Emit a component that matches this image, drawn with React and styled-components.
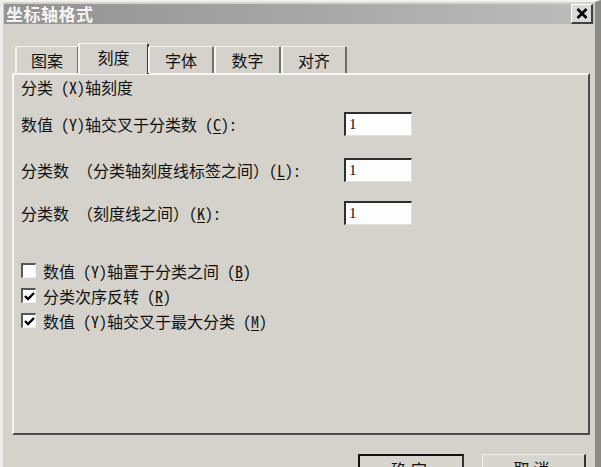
import React from "react";
import styled, { createGlobalStyle } from "styled-components";

const FONT = `"Noto Sans Mono CJK SC", "Noto Sans CJK SC", "DejaVu Sans", sans-serif`;

const Global = createGlobalStyle`
  html, body { margin: 0; padding: 0; background: #d5d2cc; }
  body { font-family: ${FONT}; }
  * { box-sizing: border-box; }
`;

const Window = styled.div`
  width: 601px;
  height: 467px;
  overflow: hidden;
  background: #d5d2cc;
  border-top: 2px solid #f2f1ee;
  border-left: 3px solid #eeede9;
  border-right: 6px solid #8a8a88;
  padding: 2px 0 0 1px;
  display: flex;
  flex-direction: column;
  color: #111;
`;

const TitleBar = styled.div`
  height: 27px;
  margin-right: 1px;
  background: linear-gradient(90deg, #939393 0%, #a4a4a4 45%, #bdbdbd 100%);
  display: flex;
  align-items: center;
  justify-content: space-between;
  padding: 0 1px 0 2px;
`;

const Title = styled.span`
  color: #f4f4f4;
  font-family: "Noto Sans CJK SC", sans-serif;
  font-size: 17px;
  font-weight: 700;
  letter-spacing: 0.5px;
  line-height: 20px;
`;

const CloseBtn = styled.div`
  width: 22px;
  height: 20px;
  flex: none;
  background: #dcdad6;
  border-top: 1px solid #ffffff;
  border-left: 1px solid #ffffff;
  border-right: 2px solid #404040;
  border-bottom: 2px solid #404040;
  display: flex;
  align-items: center;
  justify-content: center;
`;

const Body = styled.div`
  padding: 19px 5px 0 8px;
  display: flex;
  flex-direction: column;
`;

const TabRow = styled.div`
  display: flex;
  align-items: flex-end;
  height: 30px;
  padding-left: 3px;
  position: relative;
  z-index: 1;
`;

const Tab = styled.div`
  width: ${(p) => p.$w}px;
  height: ${(p) => (p.$active ? 31 : 27)}px;
  margin: 0 ${(p) => (p.$active ? -1 : 0)}px ${(p) => (p.$active ? -1 : 0)}px;
  background: #d5d2cc;
  border-top: 1px solid #f7f6f3;
  border-left: 2px solid #f7f6f3;
  border-right: 2px solid ${(p) => (p.$active ? "#3c3c3c" : "#6e6e6c")};
  border-radius: 2px 2px 0 0;
  display: flex;
  align-items: ${(p) => (p.$active ? "flex-start" : "center")};
  padding-top: ${(p) => (p.$active ? 3 : 0)}px;
  justify-content: center;
  font-size: 16px;
  line-height: 20px;
  color: #111;
`;

const Panel = styled.div`
  height: 362px;
  border-top: 2px solid #f7f6f3;
  border-left: 2px solid #f7f6f3;
  border-right: 2px solid #4a4a4a;
  border-bottom: 2px solid #4a4a4a;
  padding: 2px 0 0 7px;
  display: flex;
  flex-direction: column;
  font-size: 16px;
  line-height: 20px;
`;

const Heading = styled.div`
  height: 20px;
`;

const FieldRow = styled.div`
  display: grid;
  grid-template-columns: 323px 68px;
  align-items: center;
  margin-top: ${(p) => p.$mt}px;
  height: 24px;
  white-space: nowrap;
`;

const Input = styled.div`
  height: 24px;
  background: #fefefe;
  border-top: 2px solid #2e2e2e;
  border-left: 2px solid #2e2e2e;
  border-right: 1px solid #e0ded9;
  border-bottom: 1px solid #e0ded9;
  font-family: "Liberation Serif", serif;
  font-size: 15px;
  line-height: 20px;
  padding-left: 3px;
`;

const U = styled.span`
  text-decoration: underline;
  text-underline-offset: 2px;
`;

const CheckList = styled.div`
  display: flex;
  flex-direction: column;
  gap: 4px;
  margin-top: 35px;
`;

const CheckRow = styled.div`
  display: flex;
  align-items: center;
  height: 21px;
  gap: 7px;
  white-space: nowrap;
`;

const Box = styled.div`
  width: 15px;
  height: 15px;
  background: #fdfdfd;
  border-top: 2px solid #555;
  border-left: 2px solid #555;
  border-right: 1px solid #eee;
  border-bottom: 1px solid #eee;
  display: flex;
  align-items: center;
  justify-content: center;
`;

const Buttons = styled.div`
  display: flex;
  justify-content: flex-end;
  gap: 18px;
  padding: 19px 4px 0 0;
`;

const Button = styled.div`
  width: ${(p) => p.$w}px;
  height: 26px;
  background: #d8d5cf;
  border: ${(p) => (p.$default ? "2px solid #111" : "1px solid #f0efec")};
  border-right: 2px solid #333;
  display: flex;
  justify-content: center;
  padding-top: 3px;
  font-size: 16px;
  line-height: 20px;
  letter-spacing: 4px;
`;

const Check = () => (
  <svg width="11" height="11" viewBox="0 0 11 11">
    <path d="M1 5 L4 8 L10 2" stroke="#000" strokeWidth="2.4" fill="none" />
  </svg>
);

const CloseX = () => (
  <svg width="12" height="11" viewBox="0 0 12 11">
    <path d="M1.5 1 L10.5 10 M10.5 1 L1.5 10" stroke="#000" strokeWidth="2.6" fill="none" />
  </svg>
);

const tabs = [
  { t: "图案", w: 64 },
  { t: "刻度", w: 71, active: true },
  { t: "字体", w: 66 },
  { t: "数字", w: 67 },
  { t: "对齐", w: 66 },
];

export default function App() {
  return (
    <>
      <Global />
      <Window>
        <TitleBar>
          <Title>坐标轴格式</Title>
          <CloseBtn>
            <CloseX />
          </CloseBtn>
        </TitleBar>
        <Body>
          <TabRow>
            {tabs.map((x) => (
              <Tab key={x.t} $w={x.w} $active={x.active}>
                {x.t}
              </Tab>
            ))}
          </TabRow>
          <Panel>
            <Heading>分类 (X)轴刻度</Heading>
            <FieldRow $mt={15}>
              <span>
                数值 (Y)轴交叉于分类数 (<U>C</U>):
              </span>
              <Input>1</Input>
            </FieldRow>
            <FieldRow $mt={22}>
              <span>
                分类数 （分类轴刻度线标签之间）(<U>L</U>):
              </span>
              <Input>1</Input>
            </FieldRow>
            <FieldRow $mt={19}>
              <span>
                分类数 （刻度线之间）(<U>K</U>):
              </span>
              <Input>1</Input>
            </FieldRow>
            <CheckList>
              <CheckRow>
                <Box />
                <span>
                  数值 (Y)轴置于分类之间 (<U>B</U>)
                </span>
              </CheckRow>
              <CheckRow>
                <Box>
                  <Check />
                </Box>
                <span>
                  分类次序反转 (<U>R</U>)
                </span>
              </CheckRow>
              <CheckRow>
                <Box>
                  <Check />
                </Box>
                <span>
                  数值 (Y)轴交叉于最大分类 (<U>M</U>)
                </span>
              </CheckRow>
            </CheckList>
          </Panel>
          <Buttons>
            <Button $w={106} $default>
              确定
            </Button>
            <Button $w={104}>取消</Button>
          </Buttons>
        </Body>
      </Window>
    </>
  );
}
